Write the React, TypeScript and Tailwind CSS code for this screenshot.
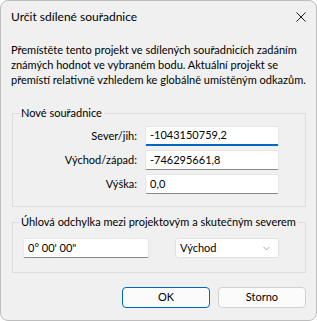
import { ChevronDown } from 'lucide-react';

const rows = [
  { label: 'Sever/jih:', value: '-1043150759,2', focused: true },
  { label: 'Východ/západ:', value: '-746295661,8', focused: false },
  { label: 'Výška:', value: '0,0', focused: false },
];

export default function App() {
  return (
    <div
      className="flex h-[321px] w-[317px] flex-col overflow-hidden rounded-[8px] border border-[#bdbdbd] bg-[#f0f0f0] text-[11px] text-black"
      style={{ fontFamily: 'Lato, "Liberation Sans", sans-serif' }}
    >
      {/* Title bar */}
      <div className="flex h-[32px] shrink-0 items-center justify-between pl-[10px] pr-[10px]">
        <span className="text-[12px]">Určit sdílené souřadnice</span>
        <svg className="size-[10px]" viewBox="0 0 10 10" fill="none" stroke="#1a1a1a" strokeWidth={1}>
          <path d="M0.5 0.5l9 9M9.5 0.5l-9 9" />
        </svg>
      </div>

      {/* Description */}
      <p className="mt-[9px] whitespace-nowrap px-[10px] leading-[15px]">
        Přemístěte tento projekt ve sdílených souřadnicích zadáním
        <br />
        známých hodnot ve vybraném bodu. Aktuální projekt se
        <br />
        přemístí relativně vzhledem ke globálně umístěným odkazům.
      </p>

      {/* Nové souřadnice */}
      <fieldset className="ml-[11px] mt-[19px] w-[294px] border border-[#dcdcdc] pb-[12px] pl-[6px]">
        <legend className="px-[2px] leading-[14px]">Nové souřadnice</legend>
        <div className="mt-[6px] flex flex-col gap-[4px]">
          {rows.map(row => (
            <div key={row.label} className="flex items-center">
              <span className="w-[126px] pr-[8px] text-right">{row.label}</span>
              <div
                className={`flex h-[20px] w-[134px] items-center rounded-[2px] border border-[#e6e6e6] bg-white pl-[4px] ${
                  row.focused ? 'border-b-2 border-b-[#0067c0]' : 'border-b-[#8a8a8a]'
                }`}
              >
                {row.value}
              </div>
            </div>
          ))}
        </div>
      </fieldset>

      {/* Úhlová odchylka */}
      <fieldset className="ml-[11px] mt-[8px] w-[294px] border border-[#dcdcdc] pb-[14px] pl-[6px]">
        <legend className="px-[2px] leading-[14px]">Úhlová odchylka mezi projektovým a skutečným severem</legend>
        <div className="mt-[9px] flex items-center">
          <div className="ml-[4px] flex h-[20px] w-[126px] items-center rounded-[2px] border border-[#e6e6e6] border-b-[#8a8a8a] bg-white pl-[4px]">
            0° 00' 00"
          </div>
          <div className="ml-[26px] flex h-[20px] w-[104px] items-center justify-between rounded-[3px] border border-[#e0e0e0] bg-white pl-[4px] pr-[6px]">
            <span>Východ</span>
            <ChevronDown className="size-[11px] text-[#606060]" strokeWidth={1.2} />
          </div>
        </div>
      </fieldset>

      {/* Buttons */}
      <div className="mt-[14px] flex justify-end gap-[8px] pr-[10px]">
        <button
          type="button"
          className="h-[21px] w-[88px] rounded-[4px] border border-[#0067c0] bg-[#fbfbfb]"
        >
          OK
        </button>
        <button
          type="button"
          className="h-[21px] w-[88px] rounded-[4px] border border-[#d0d0d0] bg-[#fbfbfb]"
        >
          Storno
        </button>
      </div>
    </div>
  );
}
